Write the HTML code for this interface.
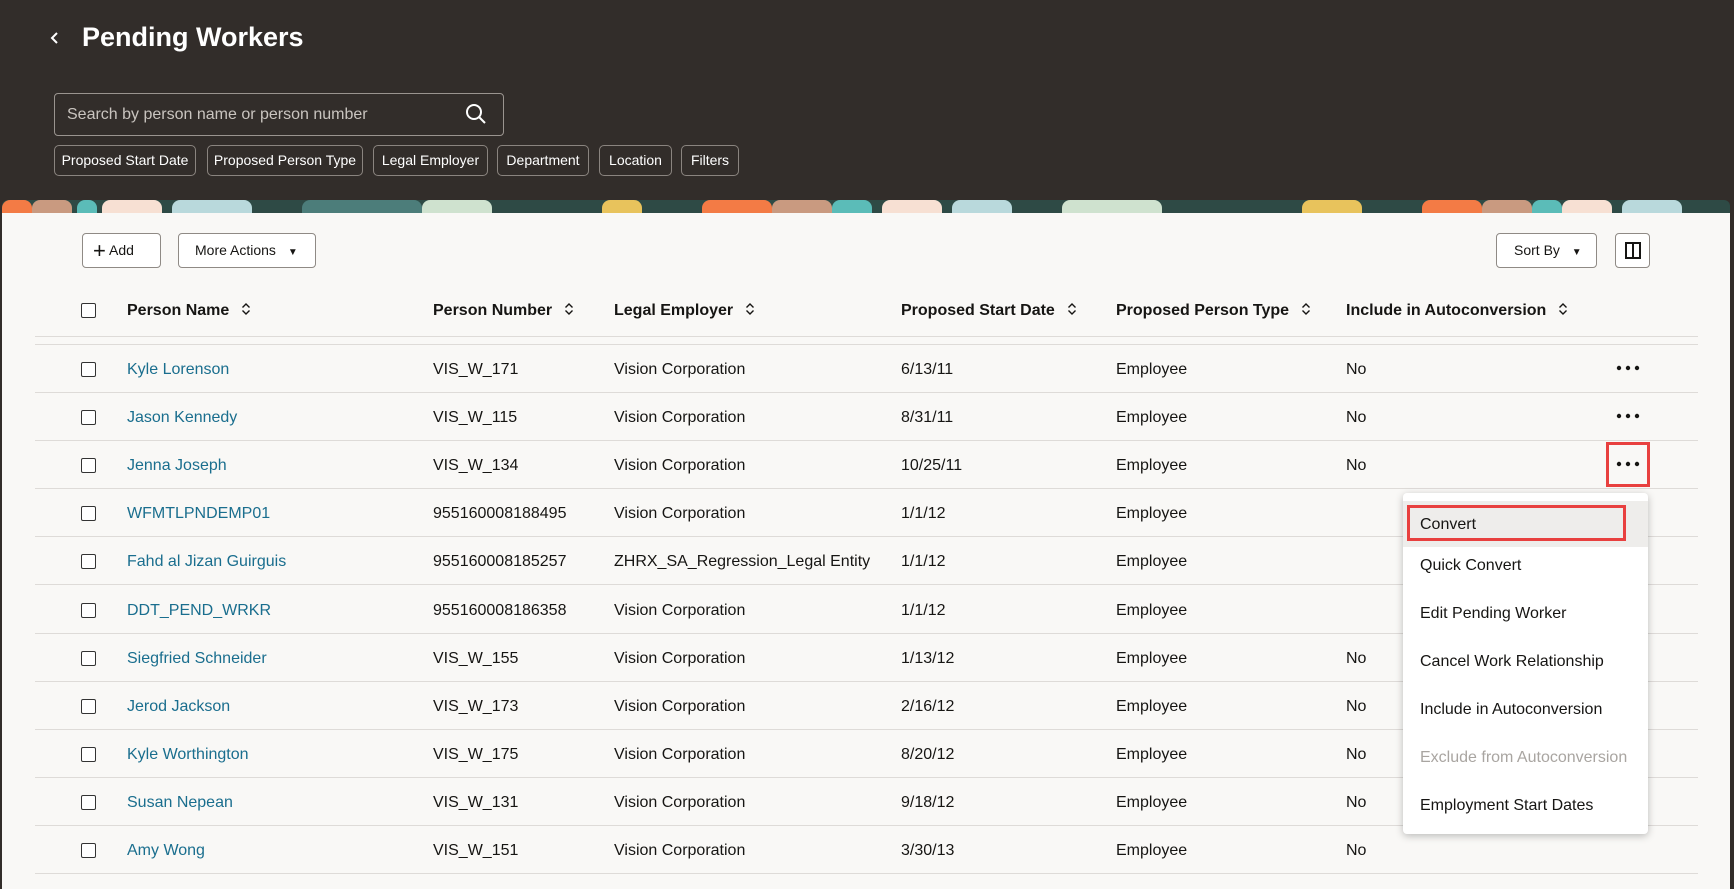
<!DOCTYPE html>
<html><head><meta charset="utf-8"><style>
*{box-sizing:border-box;margin:0;padding:0}
body{width:1734px;height:889px;overflow:hidden;background:#322d2a;font-family:"Liberation Sans",sans-serif;color:#161513;position:relative}
.abs{position:absolute}
.title{left:82px;top:22px;font-size:27px;font-weight:bold;color:#fff}
.back{left:48px;top:28px;width:14px;height:20px}
.search{left:54px;top:93px;width:450px;height:43px;border:1px solid #9a948f;border-radius:4px;color:#c9c4bf;font-size:16px;padding:12px 12px}
.chip{top:145px;height:31px;border:1px solid #8a847f;border-radius:5px;color:#fff;font-size:14px;line-height:29px;text-align:center}
.banner{left:2px;top:200px;width:1728px;height:16px;overflow:hidden;background:#2e4a45;border-radius:6px 6px 0 0}
.banner div{position:absolute;top:0;height:16px;border-radius:8px 8px 0 0}
.panel{left:2px;top:213px;width:1728px;height:676px;background:#f9f8f6}
.btn{height:35px;border:1px solid #8f8a85;border-radius:4px;background:#fff;font-size:14px;line-height:33px;color:#161513}
.hdr{top:302px;font-size:16px;font-weight:bold;color:#161513}
.cb{width:15px;height:15px;border:1.5px solid #333;border-radius:2px;background:#fff}
.line{height:1px;background:#dedbd8;left:35px;width:1663px}
.cell{font-size:16px;line-height:20px}
.lnk{color:#1a6e8e}
.sort{display:inline-block;margin-left:12px;vertical-align:-1px}
.menu{left:1403px;top:493px;width:245px;height:341px;background:#fff;border-radius:4px;box-shadow:0 2px 8px rgba(0,0,0,.25)}
.mi{position:absolute;left:17px;font-size:16px;color:#161513}
</style></head><body>
<svg class="abs back" viewBox="0 0 14 20"><path d="M9 5 L4 10 L9 15" stroke="#fff" stroke-width="2" fill="none"/></svg>
<div class="abs title">Pending Workers</div>
<div class="abs search">Search by person name or person number</div>
<svg class="abs" style="left:465px;top:103px" width="22" height="22" viewBox="0 0 22 22"><circle cx="9" cy="9" r="7" stroke="#fff" stroke-width="2" fill="none"/><path d="M14 14 L20 20" stroke="#fff" stroke-width="2"/></svg>
<div class="abs chip" style="left:54px;width:142px">Proposed Start Date</div>
<div class="abs chip" style="left:207px;width:156px">Proposed Person Type</div>
<div class="abs chip" style="left:373px;width:115px">Legal Employer</div>
<div class="abs chip" style="left:497px;width:92px">Department</div>
<div class="abs chip" style="left:599px;width:73px">Location</div>
<div class="abs chip" style="left:681px;width:58px">Filters</div>
<div class="abs banner">
<div style="left:0;width:30px;background:#f37b45"></div><div style="left:30px;width:40px;background:#c99a80"></div><div style="left:75px;width:20px;background:#5bbcb8"></div><div style="left:100px;width:60px;background:#f7e0d3"></div><div style="left:170px;width:80px;background:#b9d9dc"></div><div style="left:300px;width:120px;background:#4c7d7a"></div><div style="left:420px;width:70px;background:#cfe2cf"></div><div style="left:600px;width:40px;background:#e8c35c"></div><div style="left:700px;width:70px;background:#f37b45"></div><div style="left:770px;width:60px;background:#c99a80"></div><div style="left:830px;width:40px;background:#5bbcb8"></div><div style="left:880px;width:60px;background:#f7e0d3"></div><div style="left:950px;width:60px;background:#b9d9dc"></div><div style="left:1060px;width:100px;background:#cfe2cf"></div><div style="left:1300px;width:60px;background:#e8c35c"></div><div style="left:1420px;width:60px;background:#f37b45"></div><div style="left:1480px;width:50px;background:#c99a80"></div><div style="left:1530px;width:30px;background:#5bbcb8"></div><div style="left:1560px;width:50px;background:#f7e0d3"></div><div style="left:1620px;width:60px;background:#b9d9dc"></div>
</div>
<div class="abs panel"></div>
<div class="abs btn" style="left:82px;top:233px;width:79px;padding-left:10px"><span style="font-size:22px;vertical-align:-3px;font-weight:300">+</span> Add</div>
<div class="abs btn" style="left:178px;top:233px;width:138px;padding-left:16px">More Actions <span style="font-size:10px;margin-left:8px">▼</span></div>
<div class="abs btn" style="left:1496px;top:233px;width:101px;padding-left:17px">Sort By <span style="font-size:10px;margin-left:8px">▼</span></div>
<div class="abs btn" style="left:1615px;top:233px;width:35px"><svg style="position:absolute;left:9px;top:8px" width="16" height="17"><rect x="1" y="1" width="14" height="15" stroke="#161513" stroke-width="2" fill="none"/><path d="M8 1V16" stroke="#161513" stroke-width="2"/></svg></div>
<div class="abs cb" style="left:81px;top:303px"></div>
<div class="abs hdr" style="left:127px">Person Name<svg class="sort" width="10" height="14"><path d="M1.5 5.5L5 2L8.5 5.5M1.5 8.5L5 12L8.5 8.5" stroke="#161513" stroke-width="1.4" fill="none"/></svg></div>
<div class="abs hdr" style="left:433px">Person Number<svg class="sort" width="10" height="14"><path d="M1.5 5.5L5 2L8.5 5.5M1.5 8.5L5 12L8.5 8.5" stroke="#161513" stroke-width="1.4" fill="none"/></svg></div>
<div class="abs hdr" style="left:614px">Legal Employer<svg class="sort" width="10" height="14"><path d="M1.5 5.5L5 2L8.5 5.5M1.5 8.5L5 12L8.5 8.5" stroke="#161513" stroke-width="1.4" fill="none"/></svg></div>
<div class="abs hdr" style="left:901px">Proposed Start Date<svg class="sort" width="10" height="14"><path d="M1.5 5.5L5 2L8.5 5.5M1.5 8.5L5 12L8.5 8.5" stroke="#161513" stroke-width="1.4" fill="none"/></svg></div>
<div class="abs hdr" style="left:1116px">Proposed Person Type<svg class="sort" width="10" height="14"><path d="M1.5 5.5L5 2L8.5 5.5M1.5 8.5L5 12L8.5 8.5" stroke="#161513" stroke-width="1.4" fill="none"/></svg></div>
<div class="abs hdr" style="left:1346px">Include in Autoconversion<svg class="sort" width="10" height="14"><path d="M1.5 5.5L5 2L8.5 5.5M1.5 8.5L5 12L8.5 8.5" stroke="#161513" stroke-width="1.4" fill="none"/></svg></div>
<div class="abs line" style="top:336px"></div>
<div class="abs line" style="top:344px"></div>
<div id="rows"></div>
<div class="abs" style="left:1606px;top:442px;width:44px;height:45px;border:3px solid #e8403f"></div>
<div class="abs menu">
<div class="abs" style="left:0;top:8px;width:245px;height:46px;background:#eeedeb"></div>
<div class="abs" style="left:4px;top:12px;width:219px;height:36px;border:3px solid #e8403f"></div>
<div class="mi" style="top:23px">Convert</div>
<div class="mi" style="top:64px">Quick Convert</div>
<div class="mi" style="top:112px">Edit Pending Worker</div>
<div class="mi" style="top:160px">Cancel Work Relationship</div>
<div class="mi" style="top:208px">Include in Autoconversion</div>
<div class="mi" style="top:256px;color:#a9a5a1">Exclude from Autoconversion</div>
<div class="mi" style="top:304px">Employment Start Dates</div>
</div>
<script>
var d=[["Kyle Lorenson","VIS_W_171","Vision Corporation","6/13/11","No",1],["Jason Kennedy","VIS_W_115","Vision Corporation","8/31/11","No",1],["Jenna Joseph","VIS_W_134","Vision Corporation","10/25/11","No",1],["WFMTLPNDEMP01","955160008188495","Vision Corporation","1/1/12","",0],["Fahd al Jizan Guirguis","955160008185257","ZHRX_SA_Regression_Legal Entity","1/1/12","",0],["DDT_PEND_WRKR","955160008186358","Vision Corporation","1/1/12","",0],["Siegfried Schneider","VIS_W_155","Vision Corporation","1/13/12","No",0],["Jerod Jackson","VIS_W_173","Vision Corporation","2/16/12","No",0],["Kyle Worthington","VIS_W_175","Vision Corporation","8/20/12","No",0],["Susan Nepean","VIS_W_131","Vision Corporation","9/18/12","No",0],["Amy Wong","VIS_W_151","Vision Corporation","3/30/13","No",0]];
var h="";d.forEach(function(r,i){var c=368+i*48.1,t=c-8;
h+='<div class="abs cb" style="left:81px;top:'+(c-6)+'px"></div>';
h+='<div class="abs cell lnk" style="left:127px;top:'+t+'px">'+r[0]+'</div>';
h+='<div class="abs cell" style="left:433px;top:'+t+'px">'+r[1]+'</div>';
h+='<div class="abs cell" style="left:614px;top:'+t+'px">'+r[2]+'</div>';
h+='<div class="abs cell" style="left:901px;top:'+t+'px">'+r[3]+'</div>';
h+='<div class="abs cell" style="left:1116px;top:'+t+'px">Employee</div>';
h+='<div class="abs cell" style="left:1346px;top:'+t+'px">'+r[4]+'</div>';
if(r[5])h+='<svg class="abs" style="left:1616px;top:'+(c-3)+'px" width="24" height="6"><circle cx="3" cy="3" r="2.2" fill="#161513"/><circle cx="12" cy="3" r="2.2" fill="#161513"/><circle cx="21" cy="3" r="2.2" fill="#161513"/></svg>';
h+='<div class="abs line" style="top:'+(c+24)+'px"></div>';});
document.getElementById("rows").innerHTML=h;
</script>
</body></html>
